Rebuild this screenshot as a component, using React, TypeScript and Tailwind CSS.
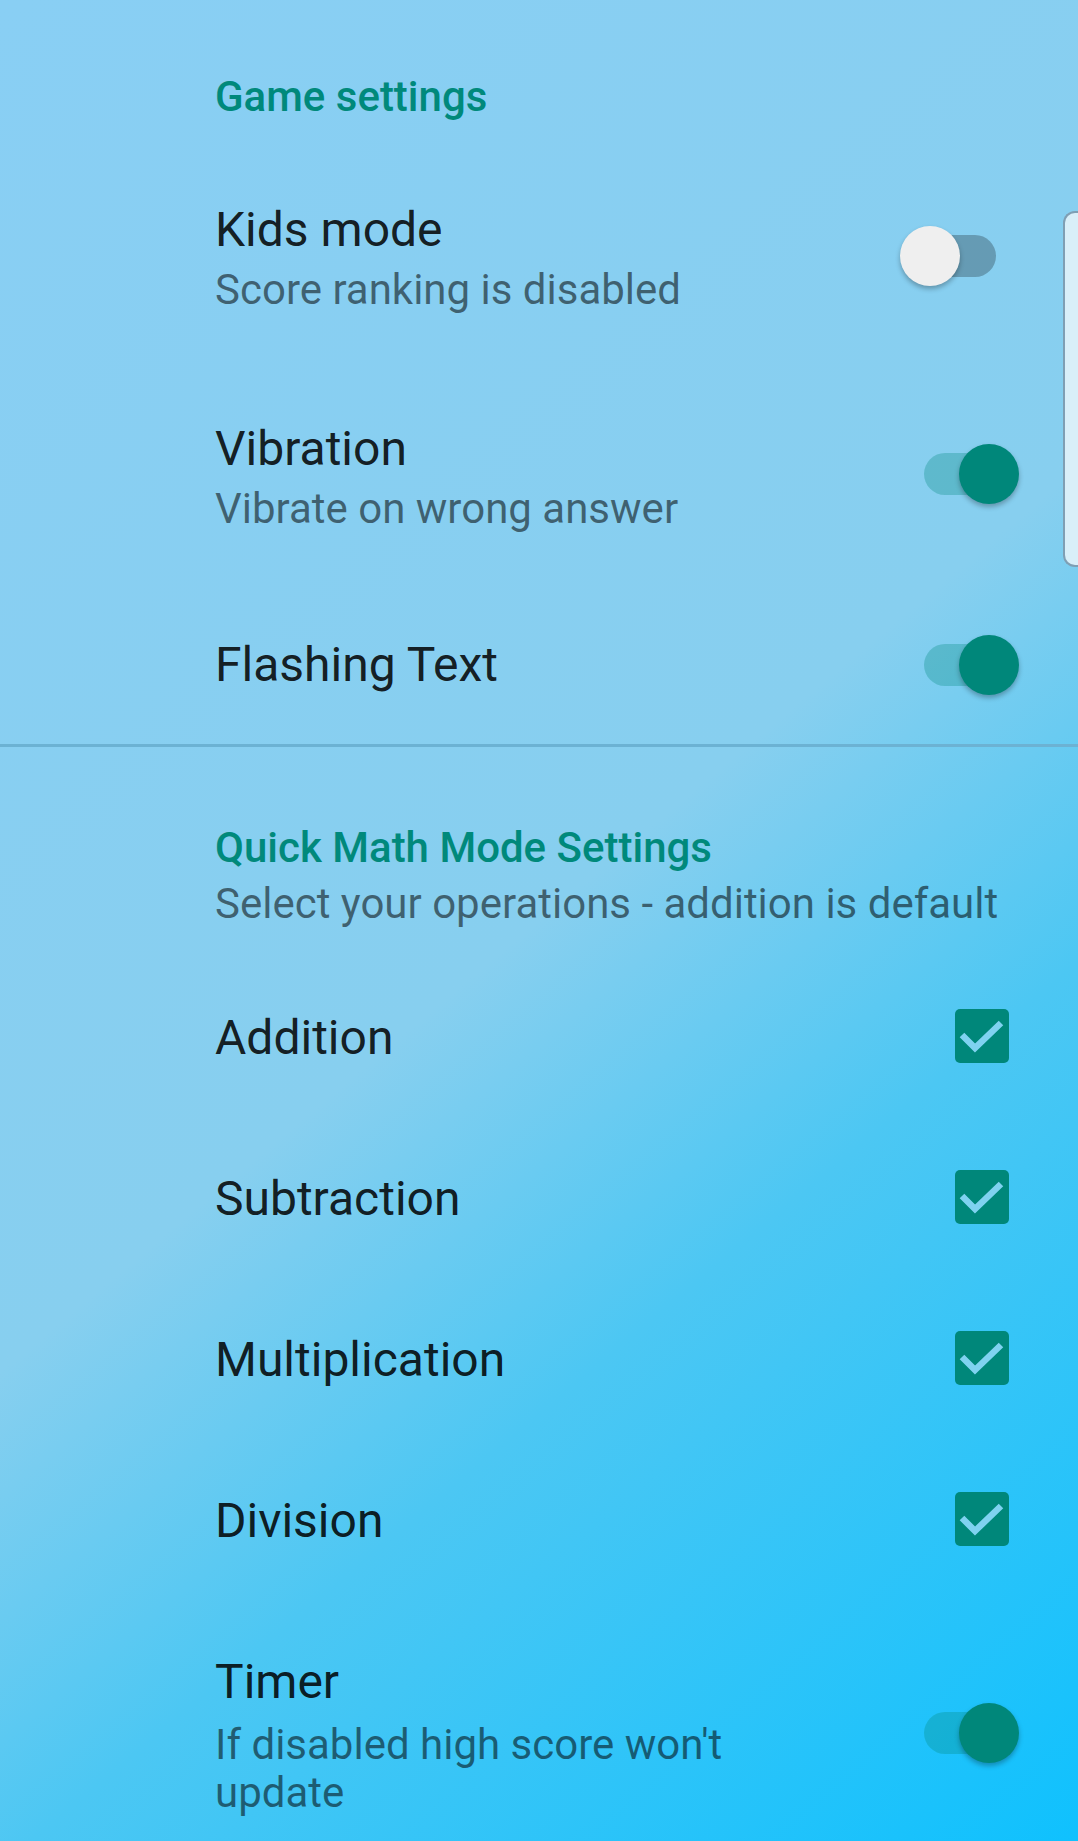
import React from "react";

function Toggle({ on }: { on: boolean }) {
  return (
    <div className="relative h-[60px] w-[119px] shrink-0">
      <div
        className={
          "absolute left-[24px] top-[9px] h-[42px] w-[72px] rounded-full " +
          (on ? "bg-[#00897b]/30" : "bg-black/25")
        }
      />
      <div
        className={
          "absolute top-0 h-[60px] w-[60px] rounded-full shadow-[0_3px_5px_rgba(0,0,0,0.28)] " +
          (on ? "left-[59px] bg-[#00877a]" : "left-0 bg-[#efefef]")
        }
      />
    </div>
  );
}

function Check() {
  return (
    <div className="flex h-[54px] w-[54px] shrink-0 items-center justify-center rounded-[5px] bg-[#00877a]">
      <svg width="54" height="54" viewBox="0 0 54 54">
        <path d="M7 26 L20 39 L46 14" fill="none" stroke="#7fd2f0" strokeWidth="6.5" strokeLinecap="butt" strokeLinejoin="miter" />
      </svg>
    </div>
  );
}

function Title({ children }: { children: React.ReactNode }) {
  return <div className="text-[48px] leading-[60px] text-black/[0.87]">{children}</div>;
}

function Sub({ children, className = "" }: { children: React.ReactNode; className?: string }) {
  return <div className={"text-[42px] leading-[56px] text-black/[0.54] " + className}>{children}</div>;
}

function Category({ children }: { children: React.ReactNode }) {
  return <div className="text-[42px] font-medium leading-[56px] text-[#00897b]">{children}</div>;
}

export default function App() {
  return (
    <div
      className="relative min-h-[1841px] w-full overflow-hidden bg-[linear-gradient(140deg,#89cff4_0%,#87cfef_50%,#4cc7f3_68%,#0fc1fe_100%)]"
      style={{ fontFamily: "Roboto, 'Noto Sans', Arial, sans-serif" }}
    >
      <div className="flex flex-col">
        {/* Game settings */}
        <div className="mt-[69px] pl-[215px]">
          <Category>Game settings</Category>
        </div>

        <div className="mt-[75px] flex items-center pl-[215px] pr-[59px]">
          <div className="flex-1">
            <Title>Kids mode</Title>
            <Sub className="mt-[2px]">Score ranking is disabled</Sub>
          </div>
          <div className="-mt-[6px]">
            <Toggle on={false} />
          </div>
        </div>

        <div className="mt-[101px] flex items-center pl-[215px] pr-[59px]">
          <div className="flex-1">
            <Title>Vibration</Title>
            <Sub className="mt-[2px]">Vibrate on wrong answer</Sub>
          </div>
          <div className="-mt-[9px]">
            <Toggle on={true} />
          </div>
        </div>

        <div className="mt-[98px] flex items-center pl-[215px] pr-[59px]">
          <div className="flex-1">
            <Title>Flashing Text</Title>
          </div>
          <Toggle on={true} />
        </div>

        <div className="mt-[49px] h-[3px] w-full bg-[#6cb2d3]" />

        {/* Quick Math */}
        <div className="mt-[73px] pl-[215px]">
          <Category>Quick Math Mode Settings</Category>
          <Sub className="mt-0">Select your operations - addition is default</Sub>
        </div>

        {["Addition", "Subtraction", "Multiplication", "Division"].map((t, i) => (
          <div
            key={t}
            className={
              "flex items-center pl-[215px] pr-[69px] " + (i === 0 ? "mt-[76px]" : "mt-[101px]")
            }
          >
            <div className="flex-1">
              <Title>{t}</Title>
            </div>
            <div className="-mt-[4px]">
              <Check />
            </div>
          </div>
        ))}

        <div className="mt-[101px] flex items-center pl-[215px] pr-[59px]">
          <div className="flex-1">
            <Title>Timer</Title>
            <div className="mt-[9px] w-[600px] text-[42px] leading-[48px] text-black/[0.54]">
              If disabled high score won't update
            </div>
          </div>
          <div className="-mt-[4px]">
            <Toggle on={true} />
          </div>
        </div>
      </div>

      {/* overlay scrollbar */}
      <div className="absolute right-0 top-[211px] h-[356px] w-[15px] rounded-l-[12px] border-y-2 border-l-2 border-[#7f9fb4] bg-[#d9eff9]" />
    </div>
  );
}
